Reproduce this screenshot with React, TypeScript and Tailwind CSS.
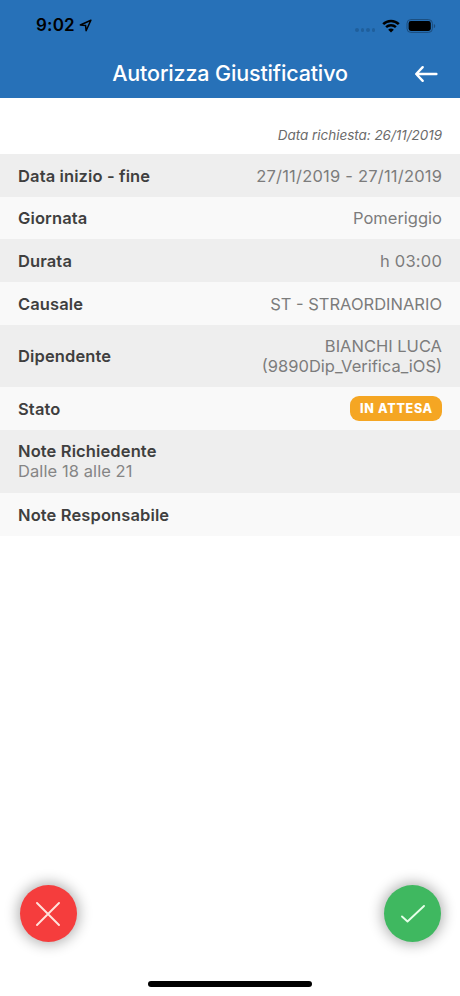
import React from 'react';

interface RowData {
  label: string;
  value?: string[];
  badge?: string;
  note?: string;
  className: string;
  valueClass?: string;
}

const ROWS: RowData[] = [
  {
    label: 'Data inizio - fine',
    value: ['27/11/2019 - 27/11/2019'],
    className: 'h-[43px] bg-[#eeeeee]',
    valueClass: 'tracking-[0.21px] -mr-[0.2px]',
  },
  { label: 'Giornata', value: ['Pomeriggio'], className: 'h-[42px] bg-[#f9f9f9]' },
  { label: 'Durata', value: ['h 03:00'], className: 'h-[43px] bg-[#eeeeee]', valueClass: 'tracking-[0.2px]' },
  { label: 'Causale', value: ['ST - STRAORDINARIO'], className: 'h-[43px] bg-[#f9f9f9]' },
  {
    label: 'Dipendente',
    value: ['BIANCHI LUCA', '(9890Dip_Verifica_iOS)'],
    className: 'h-[62px] bg-[#eeeeee]',
  },
  { label: 'Stato', badge: 'IN ATTESA', className: 'h-[43px] bg-[#f9f9f9]' },
  { label: 'Note Richiedente', note: 'Dalle 18 alle 21', className: 'h-[63px] bg-[#eeeeee] pb-px' },
  { label: 'Note Responsabile', className: 'h-[43px] bg-[#f9f9f9]' },
];

function StatusBar() {
  return (
    <div className="flex h-[51px] items-center pl-9 pr-6 text-black">
      <span className="text-[17px] font-semibold leading-none tracking-[0.2px]">9:02</span>
      <svg className="ml-1 h-[13px] w-[13px]" viewBox="0 0 13 13" fill="none">
        <path d="M11.9 1.2 1.3 6 6.6 6.5 7.1 11.7Z" stroke="currentColor" strokeWidth="1.5" strokeLinejoin="round" />
      </svg>

      <div className="ml-auto flex items-center">
        <div className="mr-[7px] mt-[9px] flex gap-[2px]">
          {[0, 1, 2, 3].map((i) => (
            <span key={i} className="size-[3.5px] rounded-full bg-[#1f5f9c]" />
          ))}
        </div>
        <svg className="h-[14px] w-[18px]" viewBox="0 0 18 14" fill="none" stroke="currentColor">
          <path d="M1.2 5.2a11.1 11.1 0 0 1 15.6 0" strokeWidth="2.6" />
          <path d="M4.1 8.2a6.95 6.95 0 0 1 9.8 0" strokeWidth="2.4" />
          <path d="M9 13.5 6.2 10.7a3.9 3.9 0 0 1 5.6 0Z" fill="currentColor" stroke="none" />
        </svg>
        <svg className="ml-[6px] h-[14px] w-[30px]" viewBox="0 0 30 14" fill="none">
          <rect x="1" y="0.6" width="25.4" height="12.8" rx="3.8" stroke="#1b4c7c" />
          <rect x="2.6" y="2.1" width="22.2" height="9.8" rx="2.3" fill="currentColor" />
          <path d="M27.9 4.9c1.8.6 1.8 3.6 0 4.2Z" fill="#1b4c7c" />
        </svg>
      </div>
    </div>
  );
}

function Header() {
  return (
    <header className="h-[98px] bg-[#2771b8]">
      <StatusBar />
      <div className="grid h-[45px] grid-cols-[1fr_auto_1fr] items-center text-white">
        <h1 className="col-start-2 text-[21.5px] font-medium leading-none tracking-[-0.15px]">
          Autorizza Giustificativo
        </h1>
        <button className="mr-[22px] justify-self-end" aria-label="Indietro">
          <svg className="h-[18px] w-6" viewBox="0 0 24 18" fill="none">
            <path
              d="M8.7 2.2 2.2 9l6.5 6.8M2.4 9H22.4"
              stroke="currentColor"
              strokeWidth="2.4"
              strokeLinecap="round"
              strokeLinejoin="round"
            />
          </svg>
        </button>
      </div>
    </header>
  );
}

function Row({ row }: { row: RowData }) {
  return (
    <div className={`flex items-center justify-between px-[18px] text-[16.5px] leading-5 ${row.className}`}>
      <div>
        <div className="font-semibold tracking-[0.12px] text-[#3f3f3f]">{row.label}</div>
        {row.note && <div className="tracking-[0.08px] text-[#858585]">{row.note}</div>}
      </div>
      {row.value && (
        <div className={`text-right text-[#7c7c7c] ${row.valueClass ?? ''}`}>
          {row.value.map((line) => (
            <div key={line}>{line}</div>
          ))}
        </div>
      )}
      {row.badge && (
        <span className="flex h-[25px] w-[92px] items-center justify-center rounded-[9px] bg-[#f5a623] pl-px text-[12.5px] font-extrabold tracking-[0.7px] text-white">
          {row.badge}
        </span>
      )}
    </div>
  );
}

export default function App() {
  return (
    <div className="flex h-[996px] w-[460px] flex-col overflow-hidden bg-white font-['Inter',sans-serif]">
      <Header />
      <p className="flex h-14 items-center justify-end px-[18px] pt-[18px] text-[13.5px] italic tracking-[-0.03px] text-[#6b6b6b]">
        Data richiesta: 26/11/2019
      </p>
      <main>
        {ROWS.map((row) => (
          <Row key={row.label} row={row} />
        ))}
      </main>

      <footer className="mt-auto">
        <div className="flex justify-between pl-[19.5px] pr-[19px]">
          <button
            className="flex size-[57px] items-center justify-center rounded-full bg-[#f53d3d] shadow-[0_0_14px_2px_rgba(0,0,0,0.32)]"
            aria-label="Rifiuta"
          >
            <svg className="size-6" viewBox="0 0 24 24" fill="none">
              <path d="m1 1 22 22M23 1 1 23" stroke="#ffe3dc" strokeWidth="1.9" strokeLinecap="round" />
            </svg>
          </button>
          <button
            className="flex size-[57px] items-center justify-center rounded-full bg-[#3fb860] shadow-[0_0_14px_2px_rgba(0,0,0,0.32)]"
            aria-label="Approva"
          >
            <svg className="h-[18px] w-6" viewBox="0 0 24 18" fill="none">
              <path d="m1 11.5 5.5 5L23 1" stroke="#e6ffe9" strokeWidth="1.9" strokeLinecap="round" strokeLinejoin="round" />
            </svg>
          </button>
        </div>
        <div className="mx-auto mb-[9px] mt-[39px] h-[6px] w-[164px] rounded-full bg-black" />
      </footer>
    </div>
  );
}
